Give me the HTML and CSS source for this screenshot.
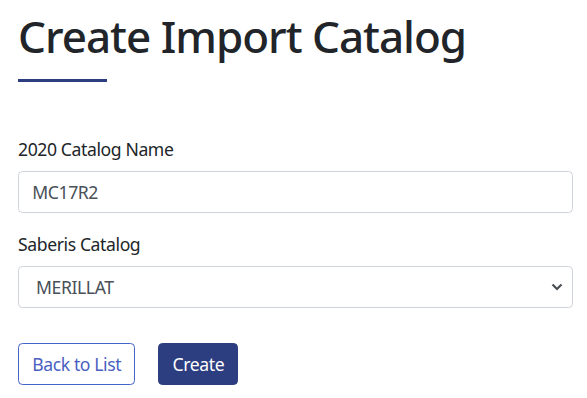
FILE: index.html
```html
<!DOCTYPE html>
<html lang="en">

<head>
  <meta charset="UTF-8">
  <title>Create Import Catalog</title>
  <link rel="stylesheet" href="styles.css">
</head>

<body>
  <div class="page">
    <h1 class="title">Create Import Catalog</h1>
    <div class="title-bar"></div>

    <form name="frm" class="catalog-form">
      <div class="form-group">
        <label for="catalogName">2020 Catalog Name</label>
        <input type="text" id="catalogName" class="form-control" value="MC17R2">
      </div>
      <div class="form-group">
        <label for="saberisCatalog">Saberis Catalog</label>
        <div class="select-wrap">
          <select id="saberisCatalog" class="form-control form-select">
            <option value="MERILLAT" selected>MERILLAT</option>
          </select>
          <svg class="select-arrow" width="12" height="8" viewBox="0 0 12 8">
            <path d="M1.5 1.5 L6 6 L10.5 1.5" fill="none" stroke="#4a4f55" stroke-width="2.2" />
          </svg>
        </div>
      </div>
      <div class="actions">
        <button type="button" class="btn btn-outline">Back to List</button>
        <button type="submit" class="btn btn-primary">Create</button>
      </div>
    </form>
  </div>
</body>

</html>
```

FILE: styles.css
```css
body {
  margin: 0;
  font-family: "Noto Sans", "Open Sans", sans-serif;
  font-size: 17.6px;
  letter-spacing: -0.4px;
  color: #212529;
  background: #fff;
}

.page {
  padding: 10px 14px 0 18px;
}

.title {
  margin: 0;
  font-size: 44px;
  font-weight: 500;
  line-height: 1.2;
  letter-spacing: -1px;
  color: #212529;
}

.title-bar {
  width: 89px;
  height: 3px;
  margin-top: 16px;
  background: #2c3e80;
}

.catalog-form {
  margin-top: 54px;
}

.form-group {
  margin-bottom: 17.6px;
}

.form-group label {
  display: block;
  margin-bottom: 8.8px;
  line-height: 1.5;
}

.form-control {
  display: block;
  box-sizing: border-box;
  width: 100%;
  height: 42px;
  padding: 6.6px 13.2px;
  font-family: inherit;
  font-size: 17.6px;
  letter-spacing: inherit;
  line-height: 1.5;
  color: #495057;
  background: #fff;
  border: 1px solid #ced4da;
  border-radius: 4.4px;
}

.select-wrap {
  position: relative;
}

.form-select {
  appearance: none;
  -webkit-appearance: none;
  padding-left: 17px;
  padding-right: 36px;
}

.select-arrow {
  position: absolute;
  right: 10px;
  top: 17px;
  pointer-events: none;
}

.actions {
  display: flex;
  gap: 23px;
  padding-top: 18px;
}

.btn {
  height: 42px;
  padding: 6.6px 13.2px;
  font-family: inherit;
  font-size: 17.6px;
  letter-spacing: inherit;
  line-height: 1.5;
  border-radius: 4.4px;
  border: 1px solid transparent;
  cursor: pointer;
}

.btn-outline {
  color: #4a5fc1;
  background: #fff;
  border-color: #4463c6;
}

.btn-primary {
  color: #fff;
  background: #2c3e80;
  border-color: #2c3e80;
}
```
